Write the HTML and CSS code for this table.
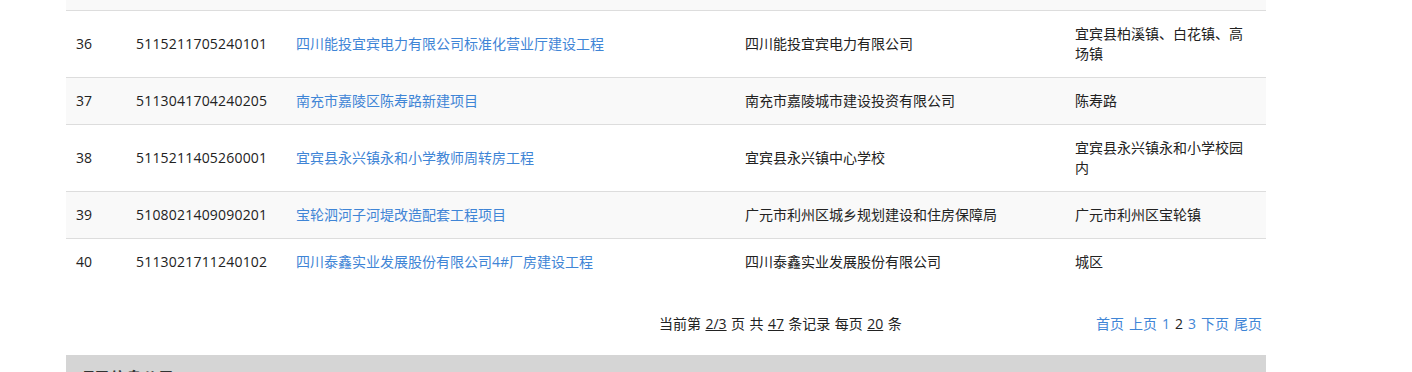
FILE: index.html
```html
<!DOCTYPE html>
<html lang="zh-CN">
<head>
<meta charset="utf-8">
<title>项目列表</title>
<link rel="stylesheet" href="styles.css">
</head>
<body>
<div class="page">
  <table class="list">
    <colgroup>
      <col class="c-no"><col class="c-code"><col class="c-name"><col class="c-org"><col class="c-loc">
    </colgroup>
    <tbody>
      <tr class="stripe cut"><td></td><td></td><td></td><td></td><td></td></tr>
      <tr>
        <td>36</td><td>5115211705240101</td>
        <td><a href="#">四川能投宜宾电力有限公司标准化营业厅建设工程</a></td>
        <td>四川能投宜宾电力有限公司</td>
        <td>宜宾县柏溪镇、白花镇、高场镇</td>
      </tr>
      <tr class="stripe">
        <td>37</td><td>5113041704240205</td>
        <td><a href="#">南充市嘉陵区陈寿路新建项目</a></td>
        <td>南充市嘉陵城市建设投资有限公司</td>
        <td>陈寿路</td>
      </tr>
      <tr>
        <td>38</td><td>5115211405260001</td>
        <td><a href="#">宜宾县永兴镇永和小学教师周转房工程</a></td>
        <td>宜宾县永兴镇中心学校</td>
        <td>宜宾县永兴镇永和小学校园内</td>
      </tr>
      <tr class="stripe">
        <td>39</td><td>5108021409090201</td>
        <td><a href="#">宝轮泗河子河堤改造配套工程项目</a></td>
        <td>广元市利州区城乡规划建设和住房保障局</td>
        <td>广元市利州区宝轮镇</td>
      </tr>
      <tr>
        <td>40</td><td>5113021711240102</td>
        <td><a href="#">四川泰鑫实业发展股份有限公司4#厂房建设工程</a></td>
        <td>四川泰鑫实业发展股份有限公司</td>
        <td>城区</td>
      </tr>
    </tbody>
  </table>

  <div class="pager">
    <div class="info">当前第 <u>2/3</u> 页 共 <u>47</u> 条记录 每页 <u>20</u> 条</div>
    <div class="links">
      <a href="#">首页</a><a href="#">上页</a><a href="#">1</a><span class="cur">2</span><a href="#">3</a><a href="#">下页</a><a href="#">尾页</a>
    </div>
  </div>

  <div class="section-head">项目信息公示</div>
</div>
</body>
</html>
```

FILE: styles.css
```css
html, body {
  margin: 0;
  padding: 0;
  background: #fff;
}
body {
  font-family: "Open Sans", "Noto Sans CJK SC", sans-serif;
  font-size: 14px;
  color: #222;
}
.page {
  width: 1200px;
  margin-left: 66px;
}
.list {
  width: 1200px;
  border-collapse: collapse;
  table-layout: fixed;
}
.c-no { width: 60px; }
.c-code { width: 160px; }
.c-name { width: 449px; }
.c-org { width: 330px; }
.c-loc { width: 201px; }
.list td {
  padding: 13px 10px;
  line-height: 20px;
  border-top: 1px solid #dddddd;
  vertical-align: middle;
}
.list td:nth-child(2) {
  letter-spacing: 0.2px;
}
.list tr.cut td {
  padding: 0;
  height: 10px;
  border-top: none;
}
.list tr.stripe td {
  background: #f9f9f9;
}
.list a {
  color: #3f85d6;
  text-decoration: none;
}
.pager {
  display: flex;
  align-items: center;
  height: 20px;
  line-height: 20px;
  margin-top: 29px;
  padding-left: 593px;
  padding-right: 4px;
  color: #222;
  font-size: 14px;
}
.pager .info {
  word-spacing: 0.8px;
}
.pager u {
  text-decoration: underline;
}
.pager .links {
  margin-left: auto;
  display: flex;
  gap: 5px;
}
.pager .links a {
  color: #3f85d6;
  text-decoration: none;
}
.pager .cur {
  color: #222;
}
.section-head {
  margin-top: 21px;
  background: #d5d5d5;
  padding: 13px 12px 7px;
  font-size: 16px;
  font-weight: bold;
  line-height: 20px;
  color: #333;
}
```
